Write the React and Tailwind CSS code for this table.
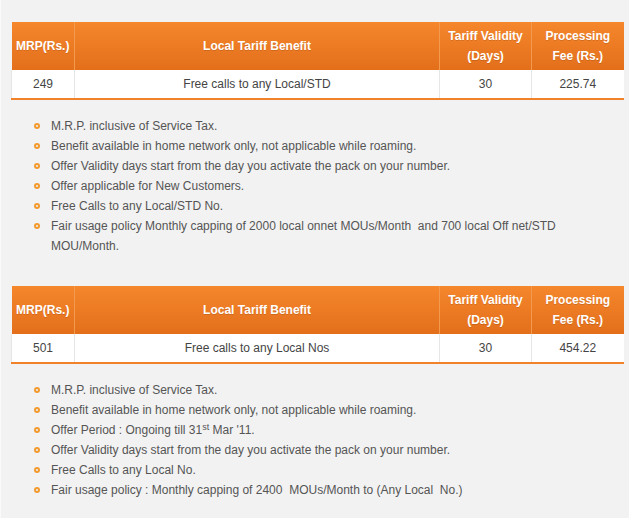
const plans = [
  {
    mrp: "249",
    benefit: "Free calls to any Local/STD",
    validity: "30",
    fee: "225.74",
    notes: [
      "M.R.P. inclusive of Service Tax.",
      "Benefit available in home network only, not applicable while roaming.",
      "Offer Validity days start from the day you activate the pack on your number.",
      "Offer applicable for New Customers.",
      "Free Calls to any Local/STD No.",
      "Fair usage policy Monthly capping of 2000 local onnet MOUs/Month\u00a0 and 700 local Off net/STD MOU/Month.",
    ],
  },
  {
    mrp: "501",
    benefit: "Free calls to any Local Nos",
    validity: "30",
    fee: "454.22",
    notes: [
      "M.R.P. inclusive of Service Tax.",
      "Benefit available in home network only, not applicable while roaming.",
      <>
        Offer Period : Ongoing till 31<sup className="text-[9px]">st</sup> Mar '11.
      </>,
      "Offer Validity days start from the day you activate the pack on your number.",
      "Free Calls to any Local No.",
      "Fair usage policy : Monthly capping of 2400\u00a0 MOUs/Month to (Any Local\u00a0 No.)",
    ],
  },
];

function TariffTable({ plan }) {
  const th = "border-r border-[#f39a4f] px-1 font-bold text-white [text-shadow:0_1px_0_rgba(0,0,0,0.15)]";
  const td = "border-r border-[#e6e6e6] text-center";
  return (
    <table className="w-[612px] table-fixed border-collapse text-[12px] leading-[20px]">
      <colgroup>
        <col className="w-[63px]" />
        <col className="w-[365px]" />
        <col className="w-[92px]" />
        <col className="w-[92px]" />
      </colgroup>
      <thead>
        <tr className="h-[48px] bg-gradient-to-b from-[#f5872c] to-[#e36f1b]">
          <th className={th}>MRP(Rs.)</th>
          <th className={th}>Local Tariff Benefit</th>
          <th className={th}>
            Tariff Validity
            <br />
            (Days)
          </th>
          <th className={th + " border-r-0"}>
            Processing
            <br />
            Fee (Rs.)
          </th>
        </tr>
      </thead>
      <tbody>
        <tr className="h-[29px] border-b-2 border-[#f0822b] bg-white text-[#444]">
          <td className={td + " border-l border-l-[#e6e6e6]"}>{plan.mrp}</td>
          <td className={td}>{plan.benefit}</td>
          <td className={td}>{plan.validity}</td>
          <td className="text-center">{plan.fee}</td>
        </tr>
      </tbody>
    </table>
  );
}

function Notes({ items }) {
  return (
    <ul className="ml-[23px] mt-[16px] text-[12px] leading-[20px] text-[#555]">
      {items.map((n, i) => (
        <li key={i} className="flex items-start">
          <span className="mt-[7px] mr-[11px] h-[6px] w-[6px] flex-none rounded-full border-2 border-[#f29a2e]" />
          <span className="w-[530px]">{n}</span>
        </li>
      ))}
    </ul>
  );
}

export default function App() {
  return (
    <div className="min-h-[518px] w-[634px] bg-white font-['Liberation_Sans',Arial,sans-serif]">
      <div className="min-h-[518px] w-[629px] border-l border-l-[#fafafa] bg-[#f2f2f2] px-[10px] pt-[22px]">
        <TariffTable plan={plans[0]} />
        <Notes items={plans[0].notes} />
        <div className="h-[30px]" />
        <TariffTable plan={plans[1]} />
        <Notes items={plans[1].notes} />
      </div>
    </div>
  );
}
